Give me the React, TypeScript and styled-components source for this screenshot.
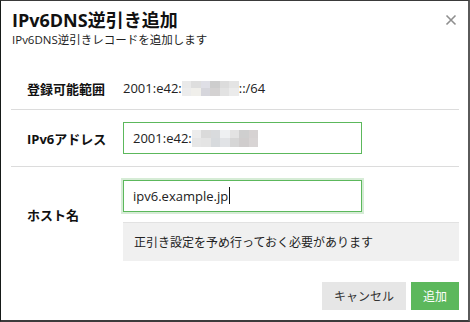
import React from "react";
import styled, { createGlobalStyle } from "styled-components";

const Global = createGlobalStyle`
  html, body { margin: 0; padding: 0; background: #1b1f1d; }
  body { width: 470px; height: 322px; overflow: hidden; }
  * { box-sizing: border-box; }
`;

const Dialog = styled.div`
  width: 470px;
  height: 322px;
  background: #fff;
  border-top: 1px solid #3a3a3a;
  border-left: 1px solid #161a18;
  border-right: 2px solid #5a5a5a;
  border-bottom: 2px solid #3c3c3c;
  font-family: "Open Sans", "Noto Sans CJK JP", sans-serif;
  color: #222;
  display: flex;
  flex-direction: column;
`;

const Header = styled.div`
  position: relative;
  padding: 7px 11px 0 11px;
  height: 66px;
`;

const Title = styled.h1`
  margin: 0;
  font-size: 18px;
  font-weight: 700;
  line-height: 24px;
  color: #111;
`;

const Subtitle = styled.p`
  margin: 0;
  font-size: 11.5px;
  line-height: 16px;
  color: #222;
`;

const Close = styled.button`
  position: absolute;
  top: 13px;
  right: 11px;
  width: 12px;
  height: 12px;
  padding: 0;
  border: 0;
  background: none;
  display: flex;
`;

const Body = styled.div`
  padding: 0 9px 0 10px;
`;

const Row = styled.div<{ $h: number; $last?: boolean }>`
  display: flex;
  align-items: center;
  min-height: ${(p) => p.$h}px;
  border-bottom: ${(p) => (p.$last ? "none" : "1px solid #dcdcdc")};
`;

const Label = styled.div`
  width: 112px;
  padding-left: 16px;
  font-size: 13px;
  font-weight: 700;
  color: #111;
  flex-shrink: 0;
`;

const Value = styled.div`
  font-size: 13px;
  display: flex;
  align-items: center;
`;

const Field = styled.div<{ $pb?: number }>`
  flex: 1;
  display: flex;
  flex-direction: column;
  padding: 12px 0 ${(p) => p.$pb ?? 0}px;
`;

const Input = styled.div<{ $focus?: boolean }>`
  width: 239px;
  height: 32px;
  border: 1px solid #5cb85c;
  box-shadow: ${(p) => (p.$focus ? "0 0 0 2px #d6ecd6" : "none")};
  padding: 0 9px;
  font-size: 13px;
  display: flex;
  align-items: center;
  color: #222;
`;

const Caret = styled.span`
  display: inline-block;
  width: 1px;
  height: 17px;
  background: #111;
  margin-left: 1px;
`;

const Help = styled.div`
  margin-top: 10px;
  background: #f0f0f0;
  border-top: 1px solid #e2e2e2;
  height: 39px;
  padding-left: 11px;
  display: flex;
  align-items: center;
  font-size: 12px;
  color: #222;
`;

const Mosaic = styled.span`
  display: inline-grid;
  grid-auto-flow: column;
  grid-template-rows: 1fr 1fr;
`;

const Cell = styled.span<{ $c: string; $w: number; $h: number }>`
  width: ${(p) => p.$w}px;
  height: ${(p) => p.$h}px;
  background: ${(p) => p.$c};
`;

const Footer = styled.div`
  display: flex;
  justify-content: flex-end;
  gap: 5px;
  padding: 21px 9px 0 0;
`;

const Button = styled.button<{ $primary?: boolean }>`
  height: 28px;
  padding: 0 12px;
  border: 0;
  font-family: inherit;
  font-size: 12px;
  color: ${(p) => (p.$primary ? "#fff" : "#333")};
  background: ${(p) => (p.$primary ? "#5cb85c" : "#e6e6e6")};
`;

const Blur = ({ colors, w, h }: { colors: string[]; w: number; h: number }) => (
  <Mosaic>
    {colors.map((c, i) => (
      <Cell key={i} $c={c} $w={w} $h={h} />
    ))}
  </Mosaic>
);

const row1 = [
  "#e9e9e9", "#ececec",
  "#dedede", "#f0efeb",
  "#dfdfe6", "#d6d6dc",
  "#cdcdcd", "#d4d2d2",
  "#dcdcdc", "#e2e2e2",
  "#e4e4e4", "#ebebeb",
];
const row2 = [
  "#ececec", "#e6e6e6",
  "#dadada", "#e4e4e4",
  "#d9dbdd", "#d7dadd",
  "#eef0f2", "#e1e3e6",
  "#e3e3e3", "#d6d6d6",
  "#cfcfcf", "#d0cdcd",
  "#d6d2d2", "#d8d4d4",
];

export default function App() {
  return (
    <>
      <Global />
      <Dialog>
        <Header>
          <Title>IPv6DNS逆引き追加</Title>
          <Subtitle>IPv6DNS逆引きレコードを追加します</Subtitle>
          <Close aria-label="close">
            <svg width="12" height="12" viewBox="0 0 12 12">
              <path d="M1.5 1.5 L10.5 10.5 M10.5 1.5 L1.5 10.5" stroke="#8f8f8f" strokeWidth="1.6" />
            </svg>
          </Close>
        </Header>
        <Body>
          <Row $h={43}>
            <Label>登録可能範囲</Label>
            <Value>
              2001:e42:
              <Blur colors={row1} w={9.5} h={7.5} />
              ::/64
            </Value>
          </Row>
          <Row $h={57}>
            <Label>IPv6アドレス</Label>
            <Field $pb={12}>
              <Input>
                2001:e42:
                <Blur colors={row2} w={9.5} h={8.5} />
              </Input>
            </Field>
          </Row>
          <Row $h={94} $last>
            <Label>ホスト名</Label>
            <Field>
              <Input $focus>
                ipv6.example.jp
                <Caret />
              </Input>
              <Help>正引き設定を予め行っておく必要があります</Help>
            </Field>
          </Row>
        </Body>
        <Footer>
          <Button>キャンセル</Button>
          <Button $primary>追加</Button>
        </Footer>
      </Dialog>
    </>
  );
}
